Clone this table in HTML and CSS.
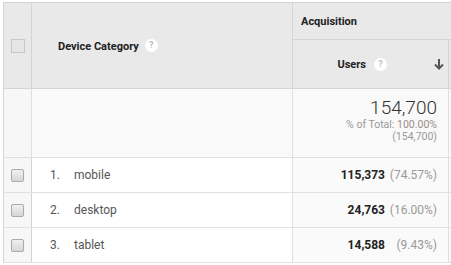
FILE: index.html
```html
<!DOCTYPE html>
<html>
<head>
<meta charset="utf-8">
<link rel="stylesheet" href="styles.css">
</head>
<body>
<div class="frame">
<table class="report">
  <colgroup>
    <col class="c-check"><col class="c-dim"><col class="c-users"><col class="c-next">
  </colgroup>
  <thead>
    <tr class="h1">
      <th rowspan="2" class="check-cell"><span class="hbox"></span></th>
      <th rowspan="2" class="dim-head"><span>Device Category</span><span class="help">?</span></th>
      <th colspan="2" class="group-head">Acquisition</th>
    </tr>
    <tr class="h2">
      <th class="metric-head"><span class="mlabel">Users</span><span class="help">?</span><span class="arrow"><svg width="10" height="12" viewBox="0 0 10 12"><path d="M5 1v9M1 6.5l4 4 4-4" fill="none" stroke="#555" stroke-width="2"/></svg></span></th>
      <th class="next-head"></th>
    </tr>
  </thead>
  <tbody>
    <tr class="total">
      <td class="check-cell"></td>
      <td></td>
      <td class="total-cell">
        <div class="big">154,700</div>
        <div class="sub">% of Total: <span class="pct">100.00%</span></div>
        <div class="sub">(154,700)</div>
      </td>
      <td class="next"></td>
    </tr>
    <tr class="row">
      <td class="check-cell"><span class="box"></span></td>
      <td class="dim"><span class="idx">1.</span>mobile</td>
      <td class="val"><b>115,373</b><span class="p">(74.57%)</span></td>
      <td class="next"></td>
    </tr>
    <tr class="row">
      <td class="check-cell"><span class="box"></span></td>
      <td class="dim"><span class="idx">2.</span>desktop</td>
      <td class="val"><b>24,763</b><span class="p">(16.00%)</span></td>
      <td class="next"></td>
    </tr>
    <tr class="row">
      <td class="check-cell"><span class="box"></span></td>
      <td class="dim"><span class="idx">3.</span>tablet</td>
      <td class="val"><b>14,588</b><span class="p">(9.43%)</span></td>
      <td class="next"></td>
    </tr>
  </tbody>
</table>
</div>
</body>
</html>
```
FILE: styles.css
```css
html, body { margin: 0; padding: 0; background: #fff; overflow: hidden; }
body { width: 451px; height: 265px; font-family: Roboto, "Liberation Sans", Arial, sans-serif; }
.frame { margin: 2px 0 0 3px; width: 448px; overflow: hidden; }
.report { border-collapse: collapse; table-layout: fixed; width: 588px; }
.c-check { width: 28px; }
.c-dim { width: 261px; }
.c-users { width: 156px; }
.c-next { width: 143px; }
.report th, .report td { padding: 0; border: 1px solid #d4d4d4; }
thead th { background: #e9e9e9; color: #222; font-size: 11px; font-weight: bold; }
.h1 { height: 37px; }
.h2 { height: 49px; }
.hbox { display: block; width: 12px; height: 12px; border: 1px solid #c8c8c8; background: #e6e6e6; margin: 0 auto; }
.dim-head { text-align: left; padding-left: 26px !important; }
.dim-head span { vertical-align: middle; }
.help { display: inline-block; width: 13px; height: 13px; border-radius: 50%; background: #fff; color: #c0c0c0; font-size: 9px; line-height: 13px; text-align: center; font-weight: bold; margin-left: 6px; }
.group-head { text-align: left; padding-left: 8px !important; border-right: none !important; }
.metric-head { text-align: right; padding-right: 4px !important; }
.metric-head span { vertical-align: middle; }
.metric-head .help { margin-left: 8px; }
.arrow { display: inline-block; margin-left: 47px; line-height: 0; }
.next-head { border-right: none !important; }
.total { height: 69px; }
.total td { background: #f9f9f9; border-color: #e0e0e0; }
.total .check-cell { background: #f7f7f7; }
.total-cell { text-align: right; padding-right: 11px !important; vertical-align: top; padding-top: 7px !important; }
.big { font-size: 19px; font-weight: 300; color: #333; line-height: 23px; }
.sub { font-size: 10.5px; color: #999; line-height: 12px; }
.pct { color: #9a8f8a; }
.row { height: 35px; }
.row td { border-color: #e0e0e0; background: #fff; }
.row .check-cell { background: #f7f7f7; border-right-color: #d4d4d4; }
.report .check-cell { text-align: center; vertical-align: middle; }
.box { display: block; width: 11px; height: 11px; margin: 0 auto; border: 1px solid #aaa; border-radius: 2px; background: linear-gradient(#f0f0f0, #d6d6d6); }
.dim { font-size: 12px; color: #555; padding-left: 18px !important; }
.idx { display: inline-block; width: 24px; }
.val { text-align: right; padding-right: 11px !important; font-size: 12px; background: #fafafa !important; }
.val b { color: #222; }
.p { display: inline-block; width: 52px; color: #999; text-align: right; }
.next { background: #fafafa !important; border-right: none !important; }
.report td:first-child, .report th:first-child { border-left: 1px solid #d4d4d4; }
```
